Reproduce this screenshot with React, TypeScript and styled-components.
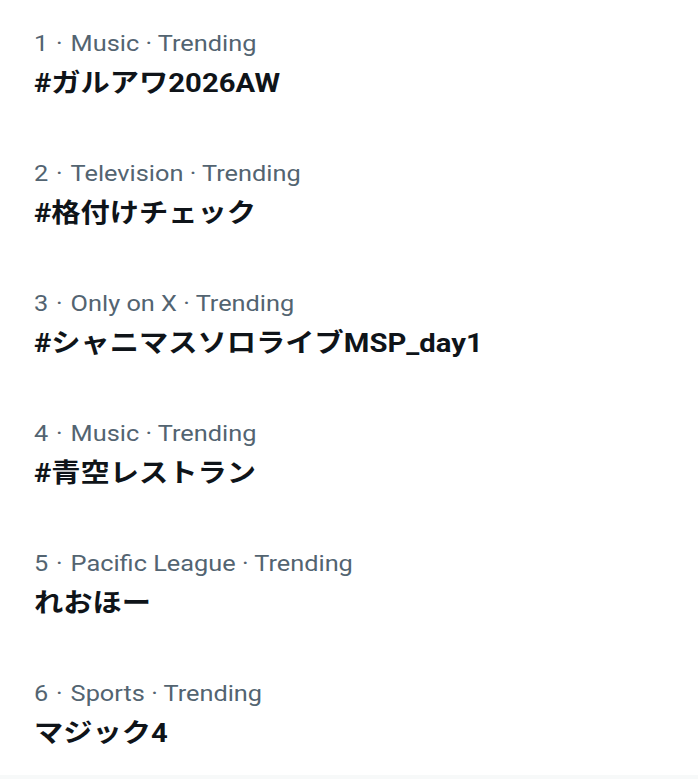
import React from "react";
import styled, { createGlobalStyle } from "styled-components";

const GlobalStyle = createGlobalStyle`
  body {
    margin: 0;
    background: #fff;
    font-family: Roboto, "Noto Sans CJK JP", sans-serif;
  }
`;

const List = styled.div`
  width: 698px;
  height: 779px;
  display: flex;
  flex-direction: column;
  box-sizing: border-box;
  padding-top: 27px;
  border-bottom: 4px solid #f7f9f9;
  overflow: hidden;
`;

const Row = styled.div`
  height: 130px;
  padding: 0 34px;
  box-sizing: border-box;
  display: flex;
  flex-direction: column;
  align-items: flex-start;
  flex-shrink: 0;
`;

const Meta = styled.div`
  font-family: Roboto, "Noto Sans CJK JP", sans-serif;
  font-size: 22.5px;
  line-height: 32px;
  color: #536471;
  white-space: nowrap;
  transform: scaleX(1.125);
  transform-origin: left center;
`;

const RankDot = styled.span`
  margin: 0 7px;
`;

const Title = styled.div`
  margin-top: 7px;
  font-family: Roboto, "Noto Sans CJK JP", sans-serif;
  font-size: 26px;
  font-weight: 700;
  line-height: 34px;
  color: #0f1419;
  white-space: nowrap;
  transform: scaleX(1.125);
  transform-origin: left center;
`;

type Trend = { rank: number; category: string; title: string };

const trends: Trend[] = [
  { rank: 1, category: "Music", title: "#ガルアワ2026AW" },
  { rank: 2, category: "Television", title: "#格付けチェック" },
  { rank: 3, category: "Only on X", title: "#シャニマスソロライブMSP_day1" },
  { rank: 4, category: "Music", title: "#青空レストラン" },
  { rank: 5, category: "Pacific League", title: "れおほー" },
  { rank: 6, category: "Sports", title: "マジック4" },
];

const App: React.FC = () => {
  return (
    <>
      <GlobalStyle />
      <List>
        {trends.map((t) => (
          <Row key={t.rank}>
            <Meta>
              {t.rank}
              <RankDot>·</RankDot>
              {t.category} · Trending
            </Meta>
            <Title>{t.title}</Title>
          </Row>
        ))}
      </List>
    </>
  );
};

export default App;
